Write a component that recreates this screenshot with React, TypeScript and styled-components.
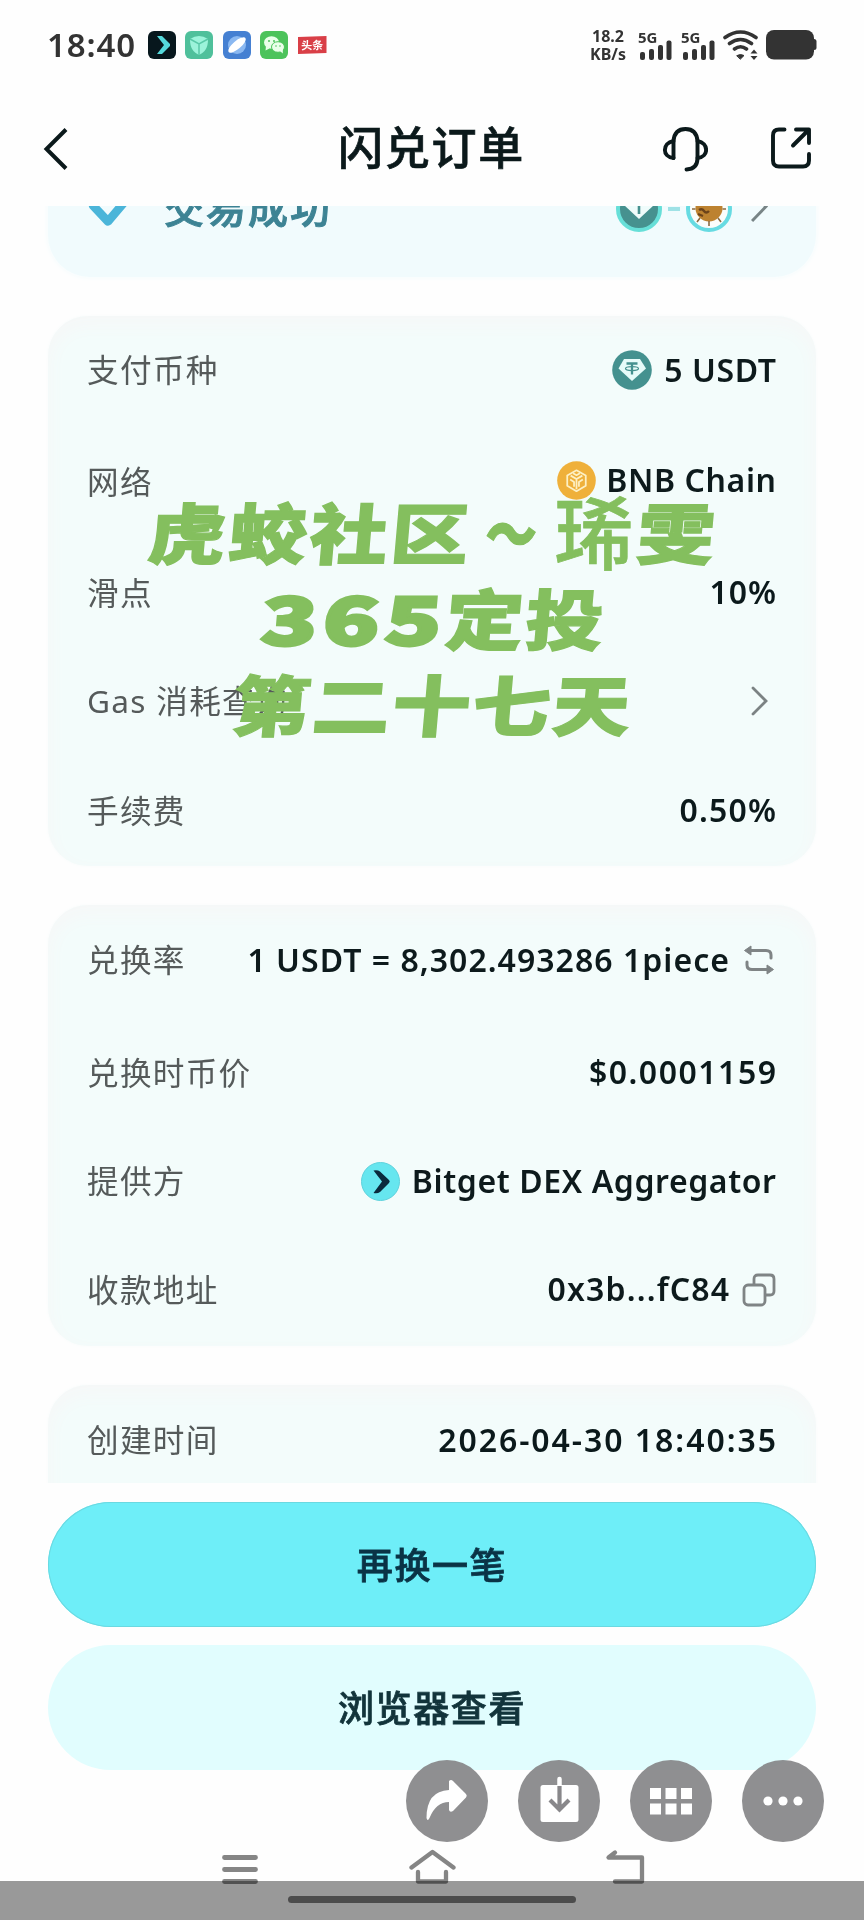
import React from 'react';
import styled, { createGlobalStyle, css } from 'styled-components';

const Global = createGlobalStyle`
  * { box-sizing: border-box; }
  body { margin: 0; background: #fefefe; }
`;

const Screen = styled.div`
  position: relative;
  width: 864px;
  height: 1920px;
  overflow: hidden;
  display: flex;
  flex-direction: column;
  background: #fefefe;
  color: #0b191b;
  font-family: 'Noto Sans', 'Noto Sans CJK SC', sans-serif;
`;

const StatusBar = styled.div`
  flex: none;
  height: 90px;
  padding: 0 47px 0 47px;
  display: flex;
  align-items: center;
  color: #333;
`;

const Clock = styled.span`
  width: 101px;
  font-size: 33px;
  line-height: 40px;
  font-weight: 600;
  letter-spacing: 0.9px;
`;

const AppIcons = styled.div`
  display: flex;
  gap: 9.4px;
  flex: 1;
`;

const StatusRight = styled.div`
  display: flex;
  align-items: center;
  height: 30px;
`;

const NetSpeed = styled.div`
  display: flex;
  flex-direction: column;
  align-items: center;
  width: 36px;
  margin-right: 12px;
  font-size: 16px;
  line-height: 18px;
  font-weight: 700;
  white-space: nowrap;
`;

const Signal = styled.div`
  position: relative;
  width: 34px;
  height: 30px;
  margin-right: 9px;
`;

const SignalLabel = styled.span`
  position: absolute;
  left: 0;
  top: 0;
  font-size: 15px;
  line-height: 14px;
  font-weight: 700;
`;

const WifiIcon = styled.svg`
  margin-left: -1px;
`;

const BatteryIcon = styled.svg`
  margin-left: 7px;
`;

const Header = styled.header`
  flex: none;
  height: 116px;
  display: grid;
  grid-template-columns: 1fr auto 1fr;
  align-items: center;
  padding: 2px 52px 0 43px;
`;

const Title = styled.h1`
  margin: 0;
  font-size: 45px;
  line-height: 60px;
  font-weight: 500;
  letter-spacing: 1.8px;
  padding: 0 0 2px 8px;
  -webkit-text-stroke: 0.7px currentColor;
`;

const HeaderActions = styled.div`
  display: flex;
  justify-content: flex-end;
  gap: 62px;
`;

const Scroll = styled.main`
  flex: none;
  height: 1277px;
  padding: 0 48px;
  overflow: hidden;
  display: flex;
  flex-direction: column;
  gap: 39px;
`;

const StatusCard = styled.section`
  flex: none;
  height: 137px;
  margin-top: -66px;
  padding: 0 48px 0 38px;
  border-radius: 42px;
  background: #f1fbfd;
  box-shadow: 0 0 5px 1px #f5fcfd;
  display: flex;
  align-items: center;
`;

const StatusText = styled.span`
  flex: 1;
  margin-left: 34px;
  font-size: 40px;
  line-height: 50px;
  font-weight: 500;
  letter-spacing: 2px;
  color: #3d8394;
  padding-bottom: 2px;
  -webkit-text-stroke: 1px currentColor;
`;

const StatusChevron = styled.svg`
  margin-left: 19px;
`;

const Card = styled.section<{ $rows: string }>`
  flex: none;
  display: grid;
  grid-template-rows: ${(p) => p.$rows};
  padding: 0 40px 0 39px;
  border-radius: 40px;
  background: #f3fcfb;
  box-shadow: inset 0 8px 16px 3px #f6f8f8, 0 0 4px 0 #f9fcfc;
`;

const Row = styled.div`
  display: flex;
  align-items: center;
  justify-content: space-between;
`;

const Label = styled.span<{ $drop?: number }>`
  font-size: 31.6px;
  line-height: 46px;
  letter-spacing: 1.3px;
  color: #555a5a;
  white-space: nowrap;
  padding-top: ${(p) => p.$drop ?? 0}px;
`;

const Value = styled.span<{ $gap?: number; $end?: number }>`
  display: flex;
  align-items: center;
  gap: ${(p) => p.$gap ?? 12}px;
  margin-right: ${(p) => p.$end ?? 0}px;
  color: #0d1a1c;
`;

const ValueText = styled.span<{ $track?: number }>`
  font-size: 32px;
  line-height: 44px;
  font-weight: 600;
  letter-spacing: ${(p) => p.$track ?? 0.6}px;
  margin-right: ${(p) => -(p.$track ?? 0.6)}px;
  white-space: nowrap;
  padding-bottom: 1px;
`;

const Footer = styled.footer`
  flex: none;
  padding: 19px 48px 0;
  display: flex;
  flex-direction: column;
  gap: 18px;
`;

const Button = styled.button<{ $primary?: boolean }>`
  height: 125px;
  border: 0;
  border-radius: 63px;
  padding: 0 0 2px;
  font-family: inherit;
  font-size: 36px;
  font-weight: 500;
  letter-spacing: 1.6px;
  color: #12343b;
  background: #e1fdfe;
  -webkit-text-stroke: 0.8px currentColor;
  ${(p) =>
    p.$primary &&
    css`
      color: #0a3346;
      background: #6eeef8;
      box-shadow: inset 0 0 0 1px #6ad9e1;
    `}
`;

const Watermark = styled.div`
  position: absolute;
  left: 0;
  top: 487px;
  width: 864px;
  display: flex;
  flex-direction: column;
  align-items: center;
  color: #84bf5e;
  font-family: 'Noto Sans CJK SC', sans-serif;
  font-weight: 900;
  line-height: 86px;
  pointer-events: none;
`;

const WatermarkLine = styled.div`
  display: flex;
`;

const Glyph = styled.span<{ $w: number; $sx?: number }>`
  display: flex;
  justify-content: center;
  width: ${(p) => p.$w}px;
  font-size: 66px;
  transform: skewX(-5deg) scaleX(${(p) => p.$sx ?? 1.18});
  -webkit-text-stroke: 1.2px currentColor;
`;

const Digit = styled(Glyph)`
  -webkit-text-stroke: 3px currentColor;
`;

const PlainGlyph = styled.span`
  width: 84px;
  text-align: center;
  font-size: 79px;
  font-weight: 500;
  -webkit-text-stroke: 0.8px currentColor;
`;

const FloatBar = styled.div`
  position: absolute;
  right: 40px;
  top: 1760px;
  display: flex;
  gap: 30px;
`;

const FloatButton = styled.div`
  width: 82px;
  height: 82px;
  border-radius: 50%;
  background: rgba(134, 133, 136, 0.92);
`;

const GestureBar = styled.div`
  position: absolute;
  left: 0;
  right: 0;
  bottom: 0;
  height: 39px;
  background: #999;
  display: flex;
  justify-content: center;
  padding-top: 15px;
`;

const Indicator = styled.div`
  width: 288px;
  height: 7px;
  border-radius: 4px;
  background: #4c4c4c;
`;

const NavKeys = styled.div`
  position: absolute;
  left: 222px;
  top: 1848px;
  width: 423px;
  display: flex;
  justify-content: space-between;
  mix-blend-mode: multiply;
`;

const TetherIcon = ({ size }: { size: number }) => (
  <svg width={size} height={size} viewBox="0 0 40 40">
    <circle cx="20" cy="20" r="19.8" fill="#44918f" />
    <path d="M12 9h16l6 9.5L20 31 6.500 18.500z" fill="#e6fbf9" />
    <path d="M14.500 13.500h11M20 13.500v11" stroke="#44918f" strokeWidth="2.300" fill="none" />
    <ellipse cx="20" cy="18.600" rx="6.500" ry="2" stroke="#44918f" strokeWidth="1.200" fill="none" />
  </svg>
);

const BnbIcon = () => (
  <svg width="39" height="39" viewBox="0 0 40 40">
    <circle cx="20" cy="20" r="19.800" fill="#efb03a" />
    <g fill="none" stroke="#fdf0c4" strokeWidth="1.800" strokeLinejoin="round">
      <path d="M20 9.500l9.500 5.300v10.600L20 31l-9.500-5.600V14.800z" />
      <path d="M14 15l6 3.500 6-3.500M20 18.500V29M13.500 19l4 2.500v5M26.500 19l-4 2.500v5M16.500 12.500l3.500 2 3.500-2" />
    </g>
  </svg>
);

const BitgetIcon = () => (
  <svg width="39" height="39" viewBox="0 0 39 39">
    <circle cx="19.500" cy="19.500" r="19" fill="#66e6ef" stroke="#5ed2dc" />
    <path d="M12.500 8.500q4-1 6.500 1l9 8.500q1.500 1.500 0 3L19 30q-2.500 2-6.500 1l8.500-11.500z" fill="#0a2a3c" />
  </svg>
);

const CoinIcon = () => (
  <svg width="46" height="46" viewBox="0 0 46 46">
    <circle cx="23" cy="23" r="21" fill="#fbfdfb" stroke="#67dbe2" strokeWidth="4" />
    <circle cx="23" cy="22" r="13.500" fill="#bd8230" />
    <path d="M23 35v5M14 32l-3 4M32 32l3 4M9.500 23H6M36.500 23H40" stroke="#8a6a40" strokeWidth="1.600" />
    <path d="M13 24q3-2 5 1t5 0M12 28l5 2" stroke="#6c431a" strokeWidth="2.400" fill="none" />
  </svg>
);

const Bars = () => (
  <svg width="34" height="30" viewBox="0 0 34 30">
    <g fill="#333">
      <rect x="2" y="22" width="5" height="8" rx="2" />
      <rect x="11" y="19" width="5" height="11" rx="2" />
      <rect x="20" y="15" width="5" height="15" rx="2" />
      <rect x="28.500" y="10.500" width="5" height="19.500" rx="2" />
    </g>
  </svg>
);

const SwapIcon = () => (
  <svg width="30" height="30" viewBox="0 0 30 30" fill="none" stroke="#7f8485" strokeWidth="3">
    <path d="M5 5.500h17q5 0 5 4.500v3M25 24.500H8q-5 0-5-4.500v-3" strokeLinecap="round" />
    <path d="M.5 5.500L7 1v9zM29.500 24.500L23 20v9z" fill="#7f8485" stroke="#7f8485" strokeWidth="1" strokeLinejoin="round" />
  </svg>
);

const CopyIcon = () => (
  <svg width="34" height="34" viewBox="0 0 34 34" fill="none" stroke="#7f8485" strokeWidth="2.800">
    <rect x="2" y="12" width="21" height="20" rx="4" />
    <path d="M12 12V6q0-4 4-4h12q4 0 4 4v12q0 4-4 4h-5" />
  </svg>
);

const Chevron = () => (
  <svg width="17" height="30" viewBox="0 0 17 30" fill="none" stroke="#7b8283" strokeWidth="2.800" strokeLinecap="round">
    <path d="M2 2l13 13L2 28" />
  </svg>
);

export default function App() {
  return (
    <>
      <Global />
      <Screen>
        <StatusBar>
          <Clock>18:40</Clock>
          <AppIcons>
            <svg width="28" height="28" viewBox="0 0 28 28">
              <rect width="28" height="28" rx="6" fill="#07171d" />
              <path d="M9 5h5l8 8v2l-8 8H9l7-9z" fill="#55d9dc" />
            </svg>
            <svg width="28" height="28" viewBox="0 0 28 28">
              <rect width="28" height="28" rx="6" fill="#4fc09b" />
              <path d="M5 8q9-6 18 0c0 9-3 13-9 16C8 21 5 17 5 8z" fill="#9cf3da" />
              <path d="M5 8l9 5 9-5M14 13v11" stroke="#59c9a8" strokeWidth="1.500" fill="none" />
            </svg>
            <svg width="28" height="28" viewBox="0 0 28 28">
              <rect width="28" height="28" rx="6" fill="#4580d2" />
              <circle cx="14" cy="14" r="9" fill="#8ab8f1" />
              <ellipse cx="14" cy="14" rx="11" ry="4" fill="#fff" transform="rotate(-40 14 14)" />
            </svg>
            <svg width="28" height="28" viewBox="0 0 28 28">
              <rect width="28" height="28" rx="6" fill="#4cc35b" />
              <ellipse cx="11.500" cy="11.500" rx="7.500" ry="6.200" fill="#eaffea" />
              <path d="M6 15l-.5 4.500 4-2z" fill="#eaffea" />
              <ellipse cx="18" cy="16" rx="6.500" ry="5.300" fill="#eaffea" stroke="#4cc35b" />
              <path d="M20 20l2.800 2.500v-5z" fill="#eaffea" />
              <g fill="#4cc35b">
                <circle cx="9" cy="10" r="1" />
                <circle cx="14" cy="10" r="1" />
                <circle cx="16" cy="15" r=".8" />
                <circle cx="20" cy="15" r=".8" />
              </g>
            </svg>
            <svg width="29" height="28" viewBox="0 0 29 28">
              <path d="M0 6l28.500-1v17L0 23z" fill="#d93f47" />
              <text x="14.200" y="18.300" fontSize="11" fontWeight="700" fill="#fff" textAnchor="middle" transform="rotate(-1 14 14)">
                头条
              </text>
            </svg>
          </AppIcons>
          <StatusRight>
            <NetSpeed>
              <span>18.2</span>
              <span>KB/s</span>
            </NetSpeed>
            <Signal>
              <SignalLabel>5G</SignalLabel>
              <Bars />
            </Signal>
            <Signal>
              <SignalLabel>5G</SignalLabel>
              <Bars />
            </Signal>
            <WifiIcon width="36" height="30" viewBox="0 0 36 30" fill="none" stroke="#333" strokeWidth="3.600" strokeLinecap="round">
              <path d="M2 7.500q15.500-11 31 0M6.500 13.500q11-8 22 0M11.500 19q6-4.500 12 0" />
              <path d="M14 25.500q3.500-2 7 0L17.500 29z" fill="#333" stroke="#333" strokeWidth="1" strokeLinejoin="round" />
              <path d="M27.500 23.500h7L31 19.500zM27.500 26h7L31 30z" fill="#333" stroke="none" />
            </WifiIcon>
            <BatteryIcon width="51" height="30" viewBox="0 0 51 30">
              <rect x="0" y="0" width="48" height="29.500" rx="8" fill="#333" />
              <rect x="45" y="9" width="5.500" height="11" rx="2.500" fill="#333" />
            </BatteryIcon>
          </StatusRight>
        </StatusBar>

        <Header>
          <svg width="26" height="44" viewBox="0 0 26 44" fill="none" stroke="#0b191b" strokeWidth="4">
            <path d="M23 2.500L3.500 22 23 41.500" />
          </svg>
          <Title>闪兑订单</Title>
          <HeaderActions>
            <svg width="46" height="46" viewBox="0 0 46 46" fill="none" stroke="#0b191b" strokeWidth="3.900" strokeLinecap="round">
              <path d="M11.500 32V15Q12.500 3 23.500 3T35.500 15v17q0 11-11 11.500" />
              <path d="M11.500 15C0 17 0 31 11.500 32M35.500 15c11.500 2 11.500 16 0 17" strokeLinejoin="round" />
            </svg>
            <svg width="42" height="44" viewBox="0 0 42 44" fill="none" stroke="#0b191b" strokeWidth="3.900" strokeLinecap="round">
              <path d="M14.500 3.500H9q-6 0-6 6v25q0 6 6 6h24q6 0 6-6V28" />
              <path d="M26 3.500h13V17M38.500 4L23 19.500" strokeLinejoin="round" />
            </svg>
          </HeaderActions>
        </Header>

        <Scroll>
          <StatusCard>
            <svg width="44" height="44" viewBox="0 0 44 44" fill="none">
              <path d="M7 18.500L22 34.500 41 12" stroke="#4bb5d9" strokeWidth="8.500" strokeLinecap="round" strokeLinejoin="round" />
            </svg>
            <StatusText>交易成功</StatusText>
            <Value $gap={4}>
              <svg width="46" height="46" viewBox="0 0 46 46">
                <circle cx="23" cy="23" r="21" fill="#46918f" stroke="#67dfd8" strokeWidth="4" />
                <path d="M14 10h18l6 9-15 14L8 19z" fill="#effcfb" />
                <path d="M16 14h14M23 14v14" stroke="#46918f" strokeWidth="2.600" />
              </svg>
              <svg width="16" height="8" viewBox="0 0 16 8">
                <path d="M2 4h12" stroke="#9fe2e6" strokeWidth="4" />
              </svg>
              <CoinIcon />
            </Value>
            <StatusChevron width="17" height="30" viewBox="0 0 17 30" fill="none" stroke="#788486" strokeWidth="3">
              <path d="M2 0l13 12.500L1 27" />
            </StatusChevron>
          </StatusCard>

          <Card $rows="108px 112px 112px 106px 112px">
            <Row>
              <Label>支付币种</Label>
              <Value>
                <TetherIcon size={40} />
                <ValueText>5 USDT</ValueText>
              </Value>
            </Row>
            <Row>
              <Label $drop={4}>网络</Label>
              <Value $gap={10}>
                <BnbIcon />
                <ValueText>BNB Chain</ValueText>
              </Value>
            </Row>
            <Row>
              <Label $drop={2}>滑点</Label>
              <ValueText $track={0.9}>10%</ValueText>
            </Row>
            <Row>
              <Label>Gas 消耗查询</Label>
              <Value $end={8}>
                <Chevron />
              </Value>
            </Row>
            <Row>
              <Label $drop={1}>手续费</Label>
              <ValueText $track={1.2}>0.50%</ValueText>
            </Row>
          </Card>

          <Card $rows="110px 114px 104px 113px">
            <Row>
              <Label>兑换率</Label>
              <Value $gap={15} $end={2}>
                <ValueText $track={1.03}>1 USDT = 8,302.493286 1piece</ValueText>
                <SwapIcon />
              </Value>
            </Row>
            <Row>
              <Label $drop={2}>兑换时币价</Label>
              <ValueText $track={1.5}>$0.0001159</ValueText>
            </Row>
            <Row>
              <Label>提供方</Label>
              <Value>
                <BitgetIcon />
                <ValueText>Bitget DEX Aggregator</ValueText>
              </Value>
            </Row>
            <Row>
              <Label>收款地址</Label>
              <Value $gap={13}>
                <ValueText $track={1.15}>0x3b...fC84</ValueText>
                <CopyIcon />
              </Value>
            </Row>
          </Card>

          <Card $rows="110px 110px">
            <Row>
              <Label>创建时间</Label>
              <ValueText $track={1.95}>2026-04-30 18:40:35</ValueText>
            </Row>
          </Card>
        </Scroll>

        <Footer>
          <Button $primary>再换一笔</Button>
          <Button>浏览器查看</Button>
        </Footer>

        <Watermark>
          <WatermarkLine>
            <Glyph $w={81}>虎</Glyph>
            <Glyph $w={81}>蛟</Glyph>
            <Glyph $w={81}>社</Glyph>
            <Glyph $w={81}>区</Glyph>
            <Glyph $w={81} $sx={0.78}>～</Glyph>
            <PlainGlyph>琋</PlainGlyph>
            <Glyph $w={81}>雯</Glyph>
          </WatermarkLine>
          <WatermarkLine>
            <Digit $w={62} $sx={1.4}>3</Digit>
            <Digit $w={62} $sx={1.4}>6</Digit>
            <Digit $w={62} $sx={1.4}>5</Digit>
            <Glyph $w={80}>定</Glyph>
            <Glyph $w={80}>投</Glyph>
          </WatermarkLine>
          <WatermarkLine>
            <Glyph $w={80}>第</Glyph>
            <Glyph $w={80}>二</Glyph>
            <Glyph $w={80}>十</Glyph>
            <Glyph $w={80}>七</Glyph>
            <Glyph $w={80}>天</Glyph>
          </WatermarkLine>
        </Watermark>

        <FloatBar>
          <FloatButton>
            <svg width="82" height="82" viewBox="0 0 82 82" fill="#fff">
              <path d="M43 21q2-2 4 0l13 13q1.500 1.500 0 3.500L47 51q-3 2-4-1v-8q-13 0-19.500 16-2 4-3 0 0-27 22.500-28z" />
            </svg>
          </FloatButton>
          <FloatButton>
            <svg width="82" height="82" viewBox="0 0 82 82">
              <rect x="22.500" y="25" width="38" height="37" rx="2.500" fill="#fff" />
              <path d="M41.500 19v7" stroke="#fff" strokeWidth="4.500" strokeLinecap="round" />
              <path d="M41.500 26v22M32 40l9.500 9.500L51 40" stroke="#88878a" strokeWidth="4.200" fill="none" />
            </svg>
          </FloatButton>
          <FloatButton>
            <svg width="82" height="82" viewBox="0 0 82 82" fill="#fff">
              <path d="M20 28h11v11H20zM35.500 28h11v11h-11zM51 28h11v11H51zM20 43.500h11v11H20zM35.500 43.500h11v11h-11zM51 43.500h11v11H51z" />
            </svg>
          </FloatButton>
          <FloatButton>
            <svg width="82" height="82" viewBox="0 0 82 82" fill="#fff">
              <circle cx="26" cy="41" r="4.600" />
              <circle cx="41" cy="41" r="4.600" />
              <circle cx="56" cy="41" r="4.600" />
            </svg>
          </FloatButton>
        </FloatBar>

        <GestureBar>
          <Indicator />
        </GestureBar>
        <NavKeys>
          <svg width="36" height="37" viewBox="0 0 36 37" fill="none" stroke="#868686" strokeWidth="4.800" strokeLinecap="round">
            <path d="M2.500 9.500h31M2.500 21.500h31M2.500 33.500h31" />
          </svg>
          <svg width="48" height="37" viewBox="0 0 48 37" fill="none" stroke="#868686" strokeWidth="4.300" strokeLinecap="round" strokeLinejoin="round">
            <path d="M3.500 19.500L24.500 4l21 15.500M10 24v9.500h28V24" />
          </svg>
          <svg width="40" height="37" viewBox="0 0 40 37" fill="none" stroke="#868686" strokeWidth="4.300" strokeLinecap="round" strokeLinejoin="round">
            <path d="M10 4.500L3.500 9.500H37V33.500H10" />
          </svg>
        </NavKeys>
      </Screen>
    </>
  );
}
